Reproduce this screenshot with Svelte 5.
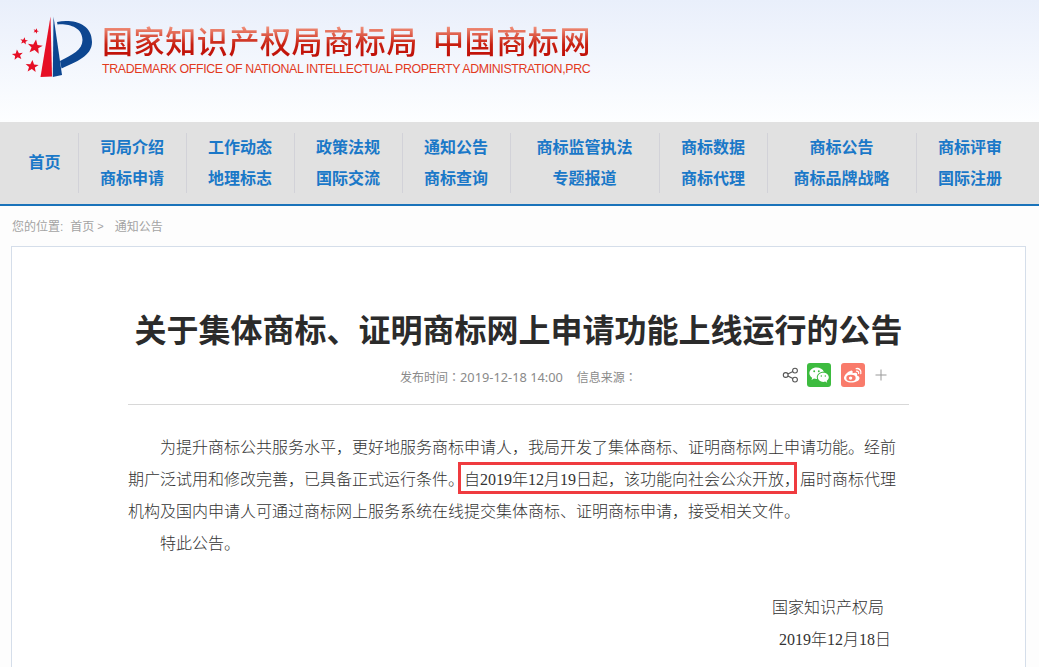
<script lang="ts">
	const navColumns = [
		{ links: ['首页'], wide: false },
		{ links: ['司局介绍', '商标申请'], wide: false },
		{ links: ['工作动态', '地理标志'], wide: false },
		{ links: ['政策法规', '国际交流'], wide: false },
		{ links: ['通知公告', '商标查询'], wide: false },
		{ links: ['商标监管执法', '专题报道'], wide: true },
		{ links: ['商标数据', '商标代理'], wide: false },
		{ links: ['商标公告', '商标品牌战略'], wide: true },
		{ links: ['商标评审', '国际注册'], wide: false }
	];

	const star = 'M0-1 .29-.31 1-.31 .45 .12 .62 .81 0 .4-.62 .81-.45 .12-1-.31-.29-.31Z';
	const stars = [
		{ x: 35, y: 47, r: 7.5, a: 8 },
		{ x: 17.5, y: 55, r: 5.5, a: -6 },
		{ x: 32, y: 66.5, r: 6.5, a: 4 },
		{ x: 24, y: 41, r: 3.8, a: 10 },
		{ x: 36, y: 31, r: 2.8, a: 20 }
	];
</script>

<div class="page">
	<header class="masthead">
		<svg class="logo" width="100" height="90" viewBox="0 0 100 90" aria-hidden="true">
			<path d="M50.5 16.5 52 76.5 40.5 77Z" fill="#e60f25" />
			<path d="M53.5 16.5 62 75 52.8 77Z" fill="#0d4690" />
			<path d="M57 22C72 19 92 23 92 42 92 56 76 62 61.5 68.5L60 61C72 55 82.5 50 82.5 40 82.5 27 68 23.5 57.5 24.5Z" fill="#0d4690" />
			{#each stars as s}
				<path d={star} fill="#e60f25" transform="translate({s.x} {s.y}) rotate({s.a}) scale({s.r})" />
			{/each}
		</svg>
		<div class="brand">
			<div class="brand-cn"><span>国家知识产权局商标局</span><span>中国商标网</span></div>
			<div class="brand-en">TRADEMARK OFFICE OF NATIONAL INTELLECTUAL PROPERTY ADMINISTRATION,PRC</div>
		</div>
	</header>

	<nav class="nav">
		{#each navColumns as col, i}
			<div class="nav-col" class:first={i === 0} class:wide={col.wide}>
				{#each col.links as link}
					<span>{link}</span>
				{/each}
			</div>
		{/each}
	</nav>

	<div class="crumbs">
		<span>您的位置:</span>
		<span class="crumb-home">首页</span>
		<span class="crumb-sep">&gt;</span>
		<span>通知公告</span>
	</div>

	<main class="card">
		<h1>关于集体商标、证明商标网上申请功能上线运行的公告</h1>

		<div class="meta">
			<span class="meta-date">发布时间：<span class="meta-num">2019-12-18 14:00</span></span>
			<span class="meta-source">信息来源：</span>
			<div class="share">
				<svg width="18" height="18" viewBox="0 0 18 18" fill="none" stroke="#555" stroke-width="1.1" aria-label="分享">
					<circle cx="3.7" cy="9" r="2.4" />
					<circle cx="13" cy="4.6" r="2.4" />
					<circle cx="13" cy="13.6" r="2.4" />
					<path d="M5.8 8 10.9 5.6M5.8 10 10.9 12.6" />
				</svg>
				<span class="share-btn wechat">
					<svg width="24" height="24" viewBox="0 0 24 24" aria-label="微信">
						<path d="M9.5 4.5C5.5 4.5 2.4 7 2.4 10.2c0 1.9 1.1 3.5 2.8 4.6l-.7 2.1 2.5-1.3c.8.2 1.6.4 2.5.4h.6c-.2-.6-.3-1.1-.3-1.7 0-3.1 2.9-5.6 6.6-5.6h.5C16 6.2 13 4.5 9.5 4.5Z" fill="#fff" />
						<path d="M21.8 14.300c0-2.600-2.500-4.600-5.500-4.600s-5.500 2-5.500 4.600 2.500 4.600 5.500 4.600c.7 0 1.300-.1 1.900-.3l2 1.100-.5-1.800c1.300-.9 2.100-2.200 2.100-3.600Z" fill="#fff" />
						<g fill="#3dbb3f">
							<circle cx="7.200" cy="8.300" r=".95" />
							<circle cx="11.800" cy="8.300" r=".95" />
							<circle cx="14.300" cy="13" r=".75" />
							<circle cx="18.300" cy="13" r=".75" />
						</g>
					</svg>
				</span>
				<span class="share-btn weibo">
					<svg width="24" height="24" viewBox="0 0 24 24" aria-label="微博">
						<path d="M10.300 19.500c-4 0-7.300-1.900-7.300-4.500 0-2.700 3.700-6.500 6.700-7.300 1.700-.4 2.400.8 1.800 2.600 2.400-1 4.500-.8 4.700.8.100.6 0 1-.2 1.500 1.500.4 2.500 1.300 2.500 2.600 0 2.400-3.900 4.300-8.200 4.300Z" fill="#fff" />
						<ellipse cx="10" cy="15" rx="4.700" ry="3.300" fill="#f97b6b" />
						<circle cx="9.600" cy="15.100" r="1.700" fill="#fff" />
						<path d="M15.200 5.600c3-.6 5.500 2 4.600 5M15.500 8.200c1.400-.3 2.500.9 2.100 2.300" fill="none" stroke="#fff" stroke-width="1.300" stroke-linecap="round" />
					</svg>
				</span>
				<svg width="12" height="12" viewBox="0 0 12 12" class="more" aria-label="更多">
					<path d="M6 .5v11M.5 6h11" stroke="#999" stroke-width="1" />
				</svg>
			</div>
		</div>

		<article class="body">
			<p class="indent">为提升商标公共服务水平，更好地服务商标申请人，我局开发了集体商标、证明商标网上申请功能。经前期广泛试用和修改完善，已具备正式运行条件。<span class="mark">自2019年12月19日起，该功能向社会公众开放，</span>届时商标代理机构及国内申请人可通过商标网上服务系统在线提交集体商标、证明商标申请，接受相关文件。</p>
			<p class="indent">特此公告。</p>
			<p class="blank">&nbsp;</p>
			<p class="sign-org">国家知识产权局</p>
			<p class="sign-date">2019年12月18日</p>
		</article>
	</main>
</div>

<style>
	:global(body) {
		margin: 0;
		background: #fdfdfd;
	}

	.page {
		height: 667px;
		overflow: hidden;
		font-family: "Liberation Sans", "Noto Sans CJK SC", sans-serif;
	}

	.masthead {
		position: relative;
		height: 122px;
		box-sizing: border-box;
		padding: 18px 0 0 102px;
		background: linear-gradient(#e9effb, #fdfeff);
	}

	.logo {
		position: absolute;
		left: 0;
		top: 0;
	}

	.brand-cn {
		display: flex;
		gap: 15px;
		font-family: "Noto Sans CJK SC", sans-serif;
		font-size: 31px;
		font-weight: 500;
		line-height: 44px;
		height: 44px;
		letter-spacing: .6px;
	}

	.brand-cn span {
		background: linear-gradient(#f0907a 20%, #c81f10 60%, #c01008 85%);
		-webkit-background-clip: text;
		background-clip: text;
		color: transparent;
	}

	.brand-en {
		font-size: 12.4px;
		line-height: 14px;
		letter-spacing: -.37px;
		color: #e23a1e;
		white-space: nowrap;
	}

	.nav {
		display: flex;
		align-items: center;
		height: 82px;
		padding-left: 12px;
		background: #e1e1e1;
		border-bottom: 2px solid #1a73ba;
	}

	.nav-col {
		display: flex;
		flex-direction: column;
		align-items: center;
		justify-content: center;
		gap: 9px;
		box-sizing: border-box;
		width: 108px;
		height: 60px;
		padding-right: 1px;
		border-left: 1px solid #d2d2d8;
		font-size: 16px;
		font-weight: 700;
		line-height: 22px;
		color: #1a78c8;
	}

	.nav-col.first {
		width: 66px;
		border-left: none;
	}

	.nav-col.wide {
		width: 149px;
	}

	.crumbs {
		display: flex;
		align-items: center;
		height: 38px;
		padding: 0 0 2px 12px;
		font-size: 12px;
		color: #a3a3a3;
	}

	.crumb-home {
		margin-left: 7px;
	}

	.crumb-sep {
		margin: 0 11px 0 3px;
		font-size: 11px;
		padding-top: 2px;
	}

	.card {
		box-sizing: border-box;
		width: 1015px;
		height: 600px;
		margin-left: 11px;
		padding: 0 116px;
		background: #fff;
		border: 1px solid #d5deea;
	}

	h1 {
		margin: 58px 0 0;
		font-family: "Noto Sans CJK SC", sans-serif;
		font-size: 32px;
		font-weight: 700;
		line-height: 46px;
		text-align: center;
		color: #2b2b2b;
	}

	.meta {
		display: flex;
		align-items: center;
		height: 30px;
		margin-top: 9px;
		padding: 0 22px 14px 272px;
		border-bottom: 1px solid #d8d8d8;
		font-family: "Noto Sans", "Noto Sans CJK TC", sans-serif;
		font-size: 12px;
		color: #8a8a8a;
	}

	.meta-date,
	.meta-source {
		padding-top: 3px;
	}

	.meta-num {
		font-size: 12.8px;
	}

	.meta-source {
		margin-left: 14px;
	}

	.share {
		display: flex;
		align-items: center;
		margin-left: auto;
	}

	.share-btn {
		display: flex;
		width: 24px;
		height: 24px;
		margin-left: 10px;
		border-radius: 3px;
		overflow: hidden;
	}

	.share-btn.wechat {
		margin-left: 7px;
		background: #3dbb3f;
	}

	.weibo {
		background: #f97b6b;
	}

	.more {
		margin-left: 10px;
	}

	.body {
		margin-top: 27px;
		font-family: "Liberation Serif", "Noto Sans CJK SC", serif;
		font-size: 16px;
		font-weight: 300;
		line-height: 32px;
		color: #333;
	}

	.body p {
		margin: 0;
	}

	.indent {
		text-indent: 32px;
	}

	.mark {
		position: relative;
	}

	.mark::after {
		content: "";
		position: absolute;
		left: -6px;
		right: 3px;
		top: -9px;
		bottom: -6px;
		border: 3px solid #ef3b3f;
	}

	.sign-org {
		text-align: right;
		padding-right: 25px;
	}

	.sign-date {
		text-align: right;
		padding-right: 18px;
	}
</style>
